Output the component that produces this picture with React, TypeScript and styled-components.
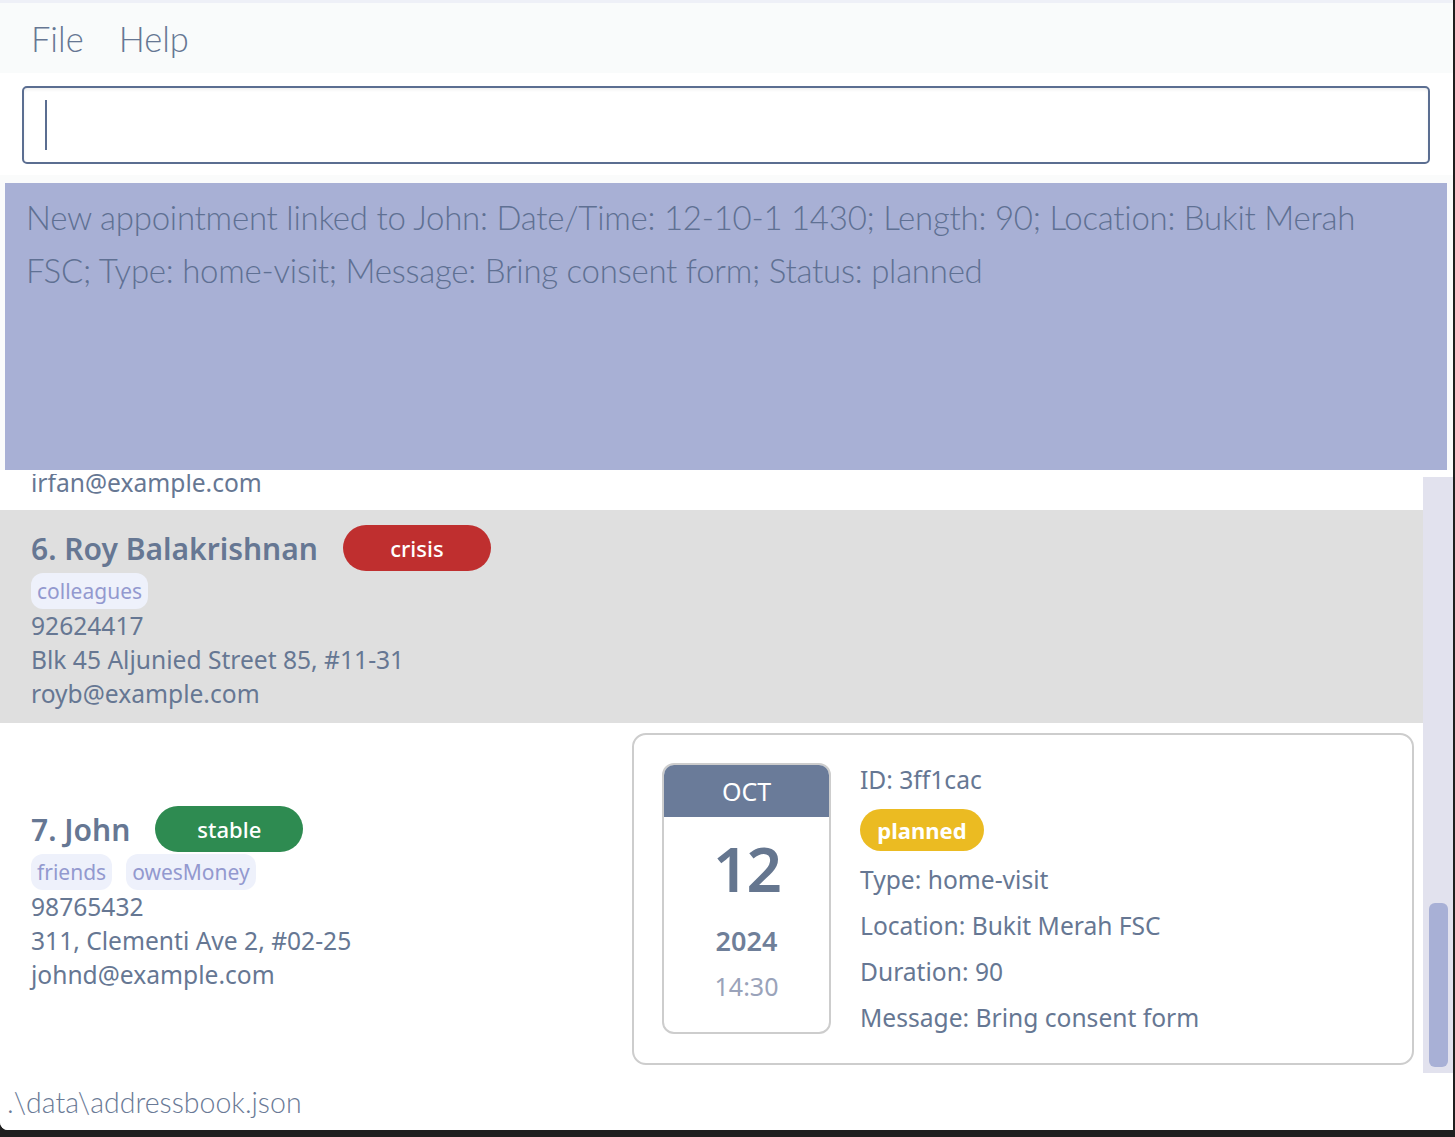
import React from "react";
import styled, { createGlobalStyle } from "styled-components";

const GlobalStyle = createGlobalStyle`
  html, body {
    margin: 0;
    padding: 0;
    background: #1f1f1f;
    overflow: hidden;
  }
  * { box-sizing: border-box; }
`;

const TEXT = "#667793";
const LIGHT_FONT = `"Lato", "Noto Sans", "Liberation Sans", sans-serif`;
const UI_FONT = `"Noto Sans", "Open Sans", "Liberation Sans", sans-serif`;

const Window = styled.div`
  width: 1453px;
  height: 1130px;
  display: flex;
  flex-direction: column;
  background: #ffffff;
  border-top: 3px solid #eef0f7;
  border-bottom-left-radius: 8px;
  overflow: hidden;
`;

const MenuBar = styled.div`
  height: 70px;
  flex: none;
  display: flex;
  align-items: center;
  gap: 35px;
  padding-left: 31px;
  background: #f9fbfb;
`;

const MenuItem = styled.span`
  font-family: ${LIGHT_FONT};
  font-weight: 300;
  font-size: 34.5px;
  color: ${TEXT};
`;

const CommandArea = styled.div`
  flex: none;
  padding: 13px 23px 11px 22px;
  background: #ffffff;
`;

const CommandBox = styled.div`
  height: 78px;
  display: flex;
  align-items: center;
  padding-left: 21px;
  border: 2px solid #5b6e91;
  border-radius: 5px;
  background: #ffffff;
  box-shadow: inset 0 2px 3px rgba(0, 0, 0, 0.06);
`;

const Caret = styled.span`
  width: 2px;
  height: 50px;
  background: #5b6e91;
`;

const ResultWrap = styled.div`
  flex: none;
  padding: 8px 6px 0 5px;
  background: #fafbfb;
`;

const ResultDisplay = styled.div`
  height: 287px;
  padding: 8px 20px 0 21px;
  background: #a8b0d5;
  font-family: ${LIGHT_FONT};
  font-weight: 300;
  font-size: 33px;
  line-height: 53px;
  letter-spacing: -0.25px;
  color: #5f7093;
`;

const ListArea = styled.div`
  height: 603px;
  flex: none;
  display: flex;
  background: #ffffff;
`;

const ListContent = styled.div`
  flex: 1;
  overflow: hidden;
  display: flex;
  flex-direction: column;
`;

const ScrollTrack = styled.div`
  width: 30px;
  margin-top: 7px;
  display: flex;
  flex-direction: column;
  justify-content: flex-end;
  padding: 0 5px 6px 6px;
  background: #e2e2ee;
`;

const ScrollThumb = styled.div`
  height: 164px;
  border-radius: 6px;
  background: #a8b0d6;
`;

const TailRow = styled.div`
  height: 36px;
  margin-top: 4px;
  flex: none;
  padding-left: 31px;
  overflow: hidden;
`;

const InfoLine = styled.div<{ $shift?: number }>`
  font-family: ${UI_FONT};
  font-size: 24.6px;
  line-height: 34px;
  height: 34px;
  color: ${TEXT};
  white-space: nowrap;
  margin-top: ${(p) => p.$shift ?? 0}px;
`;

const PersonRow = styled.div<{ $bg: string }>`
  flex: none;
  background: ${(p) => p.$bg};
`;

const PlainRow = styled(PersonRow)`
  padding: 15px 0 12px 31px;
`;

const AppointmentRow = styled(PersonRow)`
  display: flex;
  align-items: center;
  padding: 10px 9px 8px 0;
`;

const Info = styled.div`
  flex: 1;
  padding-left: 31px;
  display: flex;
  flex-direction: column;
`;

const Header = styled.div`
  display: flex;
  align-items: center;
  gap: 25px;
  height: 46px;
  margin-bottom: 2px;
`;

const Name = styled.span`
  font-family: ${UI_FONT};
  font-weight: 600;
  font-size: 30px;
  color: ${TEXT};
  white-space: nowrap;
`;

const StatusBadge = styled.span<{ $bg: string }>`
  width: 148px;
  height: 46px;
  border-radius: 23px;
  display: flex;
  align-items: center;
  justify-content: center;
  background: ${(p) => p.$bg};
  color: #ffffff;
  font-family: ${UI_FONT};
  font-weight: 500;
  font-size: 22px;
`;

const Tags = styled.div`
  display: flex;
  gap: 14px;
  height: 36px;
`;

const Tag = styled.span`
  height: 36px;
  display: flex;
  align-items: center;
  padding: 0 6px;
  border-radius: 12px;
  background: #eef1fb;
  color: #9399cf;
  font-family: ${UI_FONT};
  font-size: 21px;
`;

const Card = styled.div`
  width: 782px;
  height: 332px;
  flex: none;
  display: flex;
  align-items: flex-start;
  gap: 29px;
  padding: 28px;
  border: 2px solid #cdcdcd;
  border-radius: 14px;
  background: #ffffff;
`;

const DateBox = styled.div`
  width: 169px;
  height: 271px;
  flex: none;
  display: flex;
  flex-direction: column;
  align-items: center;
  border: 2px solid #cdcdcd;
  border-radius: 12px;
  overflow: hidden;
  font-family: ${UI_FONT};
`;

const Month = styled.div`
  align-self: stretch;
  height: 52px;
  flex: none;
  display: flex;
  align-items: center;
  justify-content: center;
  background: #6a7b99;
  color: #ffffff;
  font-size: 25px;
`;

const Day = styled.div`
  margin-top: 15px;
  line-height: 72px;
  font-size: 62px;
  font-weight: 600;
  color: #65768f;
  letter-spacing: -2px;
`;

const Year = styled.div`
  margin-top: 19px;
  line-height: 36px;
  font-size: 27px;
  font-weight: 600;
  color: #6f7f99;
`;

const Time = styled.div`
  margin-top: 10px;
  line-height: 34px;
  font-size: 25px;
  color: #9aa3ba;
`;

const Details = styled.div`
  display: flex;
  flex-direction: column;
  align-items: flex-start;
  gap: 12px;
`;

const PlannedBadge = styled.span`
  width: 124px;
  height: 42px;
  border-radius: 21px;
  display: flex;
  align-items: center;
  justify-content: center;
  background: #ebbb22;
  color: #ffffff;
  font-family: ${UI_FONT};
  font-weight: 700;
  font-size: 22px;
`;

const StatusBar = styled.div`
  height: 57px;
  flex: none;
  display: flex;
  align-items: center;
  padding-left: 7px;
  background: #ffffff;
  font-family: ${LIGHT_FONT};
  font-weight: 300;
  font-size: 28.5px;
  color: #6a7a96;
`;

export default function App() {
  return (
    <>
      <GlobalStyle />
      <Window>
        <MenuBar>
          <MenuItem>File</MenuItem>
          <MenuItem>Help</MenuItem>
        </MenuBar>
        <CommandArea>
          <CommandBox>
            <Caret />
          </CommandBox>
        </CommandArea>
        <ResultWrap>
          <ResultDisplay>
            New appointment linked to John: Date/Time: 12-10-1 1430; Length: 90; Location: Bukit Merah FSC; Type:
            home-visit; Message: Bring consent form; Status: planned
          </ResultDisplay>
        </ResultWrap>
        <ListArea>
          <ListContent>
            <TailRow>
              <InfoLine $shift={-8}>irfan@example.com</InfoLine>
            </TailRow>
            <PlainRow $bg="#dfdfdf">
              <Header>
                <Name>6. Roy Balakrishnan</Name>
                <StatusBadge $bg="#bf2f2f">crisis</StatusBadge>
              </Header>
              <Tags>
                <Tag>colleagues</Tag>
              </Tags>
              <InfoLine>92624417</InfoLine>
              <InfoLine>Blk 45 Aljunied Street 85, #11-31</InfoLine>
              <InfoLine>royb@example.com</InfoLine>
            </PlainRow>
            <AppointmentRow $bg="#ffffff">
              <Info>
                <Header>
                  <Name>7. John</Name>
                  <StatusBadge $bg="#2e8b51">stable</StatusBadge>
                </Header>
                <Tags>
                  <Tag>friends</Tag>
                  <Tag>owesMoney</Tag>
                </Tags>
                <InfoLine>98765432</InfoLine>
                <InfoLine>311, Clementi Ave 2, #02-25</InfoLine>
                <InfoLine>johnd@example.com</InfoLine>
              </Info>
              <Card>
                <DateBox>
                  <Month>OCT</Month>
                  <Day>12</Day>
                  <Year>2024</Year>
                  <Time>14:30</Time>
                </DateBox>
                <Details>
                  <InfoLine>ID: 3ff1cac</InfoLine>
                  <PlannedBadge>planned</PlannedBadge>
                  <InfoLine>Type: home-visit</InfoLine>
                  <InfoLine>Location: Bukit Merah FSC</InfoLine>
                  <InfoLine>Duration: 90</InfoLine>
                  <InfoLine>Message: Bring consent form</InfoLine>
                </Details>
              </Card>
            </AppointmentRow>
          </ListContent>
          <ScrollTrack>
            <ScrollThumb />
          </ScrollTrack>
        </ListArea>
        <StatusBar>.\data\addressbook.json</StatusBar>
      </Window>
    </>
  );
}
